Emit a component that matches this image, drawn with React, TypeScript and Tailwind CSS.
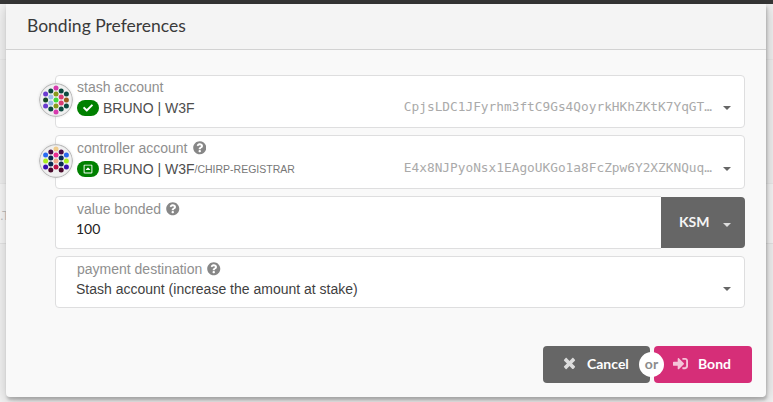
import type { ReactNode } from "react";
import { FaCheck, FaQuestionCircle, FaRegCaretSquareUp, FaSignInAlt } from "react-icons/fa";

type Dot = [number, number, string];

const stashDots: Dot[] = [
  [17, 5, "#d63bae"], [17, 11, "#8a9a1b"], [17, 17, "#3cdc3c"], [17, 23, "#8a9a1b"], [17, 29, "#d63bae"],
  [11.8, 8, "#0c4a40"], [11.8, 14, "#9abde8"], [11.8, 20, "#9abde8"], [11.8, 26, "#0c4a40"],
  [22.2, 8, "#0c4a40"], [22.2, 14, "#db3b73"], [22.2, 20, "#db3b73"], [22.2, 26, "#0c4a40"],
  [6.6, 11, "#6a3bd0"], [6.6, 17, "#144a26"], [6.6, 23, "#6a3bd0"],
  [27.4, 11, "#0c4a40"], [27.4, 17, "#9a5a1b"], [27.4, 23, "#0c4a40"],
];

const controllerDots: Dot[] = [
  [17, 5, "#f0cb8a"], [17, 11, "#eb2a90"], [17, 17, "#f0a98a"], [17, 23, "#c01448"],
  [11.8, 8, "#4a0b45"], [11.8, 14, "#0b2a50"], [11.8, 20, "#0b2a50"], [11.8, 26, "#4a0b2c"],
  [22.2, 8, "#4a0b45"], [22.2, 14, "#0b2a50"], [22.2, 20, "#0b2a50"], [22.2, 26, "#4a0b2c"],
  [6.6, 11, "#2a6af0"], [6.6, 17, "#a8f020"], [6.6, 23, "#3a10b0"],
  [27.4, 11, "#2a6af0"], [27.4, 17, "#a8f020"], [27.4, 23, "#3a10b0"],
];

function Identicon({ dots, className }: { dots: Dot[]; className: string }) {
  return (
    <svg
      viewBox="0 0 34 34"
      className={`absolute -left-[17px] size-[34px] rounded-full shadow-[0_0_3px_0_rgba(0,0,0,0.1)] ${className}`}
    >
      <circle cx="17" cy="17" r="16.4" fill="#f0f0f0" stroke="#bcbcbc" strokeWidth="1.2" />
      {dots.map(([x, y, fill]) => (
        <circle key={`${x}-${y}`} cx={x} cy={y} r="2.5" fill={fill} />
      ))}
    </svg>
  );
}

function Caret({ className = "text-[#666]" }: { className?: string }) {
  return (
    <svg viewBox="0 0 8 4" className={`h-1 w-2 shrink-0 ${className}`} fill="currentColor">
      <path d="M0 0h8L4 4z" />
    </svg>
  );
}

function Label({ children, help }: { children: ReactNode; help?: boolean }) {
  return (
    <div className="flex h-[20px] items-center gap-[5px] text-[14px] text-[#8f8f8f]">
      <span>{children}</span>
      {help && <FaQuestionCircle className="size-[13.5px] text-[#878787]" />}
    </div>
  );
}

function Account({ address, children }: { address: string; children: ReactNode }) {
  return (
    <div className="flex h-5 items-center">
      <div className="flex flex-1 items-center text-[14px] text-[#4e4e4e]">{children}</div>
      <span className="mr-[11px] pb-[2px] font-['DejaVu_Sans_Mono',monospace] text-[12.8px] text-[#aaa]">{address}</span>
      <Caret />
    </div>
  );
}

function Badge({ children }: { children: ReactNode }) {
  return (
    <span className="mr-[4px] flex h-4 w-[22px] items-center justify-center rounded-full bg-[green] text-white">
      {children}
    </span>
  );
}

const box = "relative rounded border border-[#dededf] bg-white pl-[21px] pr-[13px]";

export default function App() {
  return (
    <div className="relative h-[402px] w-[773px] overflow-hidden bg-[#f5f5f5] font-['Liberation_Sans',Arial,sans-serif]">
      <div className="h-1 bg-[#373737]" />
      <div className="absolute left-0 top-[59px] h-[125px] w-full border-y border-[#ededed] bg-[#f4f4f4]" />
      <div className="absolute left-0 top-[184px] h-[60px] w-full border-b border-[#e8e8e8] bg-[#fafafa]" />
      <span className="absolute left-0 top-[206px] -tracking-[1.5px] text-[13px] text-[#c4c4c4]">.T</span>
      <section className="relative ml-[6px] h-[393px] w-[760px] rounded-b-[4px] bg-[#f9f9f9] shadow-[1px_3px_3px_0_rgba(0,0,0,0.2),1px_3px_15px_2px_rgba(0,0,0,0.2)]">
        <header className="flex h-[46px] items-center border-b border-[#d2d2d2] bg-[#f4f4f4] pl-[21px] font-[Lato,sans-serif] text-[17.5px] text-[#3a3a3a]">
          <h1>Bonding Preferences</h1>
        </header>
        <div className="flex flex-col pl-[49px] pr-[21px] pt-[25px]">
          <div className={`${box} mb-[7px] h-[53px] pt-[1px]`}>
            <Identicon dots={stashDots} className="top-[7px]" />
            <Label>stash account</Label>
            <div className="pt-[1px]">
              <Account address="CpjsLDC1JFyrhm3ftC9Gs4QoyrkHKhZKtK7YqGT…">
                <Badge><FaCheck className="size-[10px]" /></Badge>
                BRUNO | W3F
              </Account>
            </div>
          </div>
          <div className={`${box} mb-[7px] h-[54px] pt-[2px]`}>
            <Identicon dots={controllerDots} className="top-[8px]" />
            <Label help>controller account</Label>
            <div className="pt-[1px]">
              <Account address="E4x8NJPyoNsx1EAgoUKGo1a8FcZpw6Y2XZKNQuq…">
                <Badge><FaRegCaretSquareUp className="size-[10px]" /></Badge>
                BRUNO | W3F<span className="pt-[1px] text-[10.5px] text-[#777]">/CHIRP-REGISTRAR</span>
              </Account>
            </div>
          </div>
          <div className="mb-[7px] flex h-[53px]">
            <div className="flex-1 rounded-l border border-r-0 border-[#dededf] bg-white pl-[21px] pt-[2px]">
              <Label help>value bonded</Label>
              <div className="-ml-px font-[Lato,sans-serif] text-[14px] leading-5 text-[#222]">100</div>
            </div>
            <button className="mt-[1px] flex h-[51px] w-[84px] items-center rounded-r bg-[#666] pl-[18px] font-[Lato,sans-serif] text-[14px] font-bold text-[#f5f5f5]">
              <span className="pb-[2px]">KSM</span>
              <Caret className="ml-[13px] mt-[5px] text-[#ddd]" />
            </button>
          </div>
          <div className={`${box} h-[52px] pt-[2px]`}>
            <Label help>payment destination</Label>
            <div className="-ml-px flex h-5 items-center justify-between text-[14px] text-[#3f3f3f]">
              <span>Stash account (increase the amount at stake)</span>
              <Caret />
            </div>
          </div>
        </div>
        <footer className="relative mr-[14px] mt-[38px] flex justify-end gap-1 font-[Lato,sans-serif] text-[14px] font-bold text-white">
          <button className="flex h-[37px] w-[107px] items-center rounded bg-[#666] pb-[2px] pl-[20px]">
            <svg viewBox="0 0 384 512" className="mr-[11px] h-[15px] w-[13px] fill-[#dcdcdc]">
              <path d="M323.1 441l53.9-53.9c9.4-9.4 9.4-24.5 0-33.9L279.8 256l97.2-97.2c9.4-9.4 9.4-24.5 0-33.9L323.1 71c-9.4-9.4-24.5-9.4-33.9 0L192 168.2 94.8 71c-9.4-9.4-24.5-9.4-33.9 0L7 124.9c-9.4 9.4-9.4 24.5 0 33.9l97.2 97.2L7 353.2c-9.4 9.4-9.4 24.5 0 33.9L60.9 441c9.4 9.4 24.5 9.4 33.9 0l97.2-97.2 97.2 97.2c9.3 9.3 24.5 9.3 33.9 0z" />
            </svg>
            Cancel
          </button>
          <button className="flex h-[37px] w-[98px] items-center rounded bg-[#d62e78] pb-[2px] pl-[19px]">
            <FaSignInAlt className="mr-[10px] size-[15px] text-[#f4c5d9]" />
            Bond
          </button>
          <span className="absolute right-[88px] top-[6px] flex size-[25px] items-center justify-center rounded-full bg-white pb-[2px] text-[#8c8c8c]">
            or
          </span>
        </footer>
      </section>
    </div>
  );
}
